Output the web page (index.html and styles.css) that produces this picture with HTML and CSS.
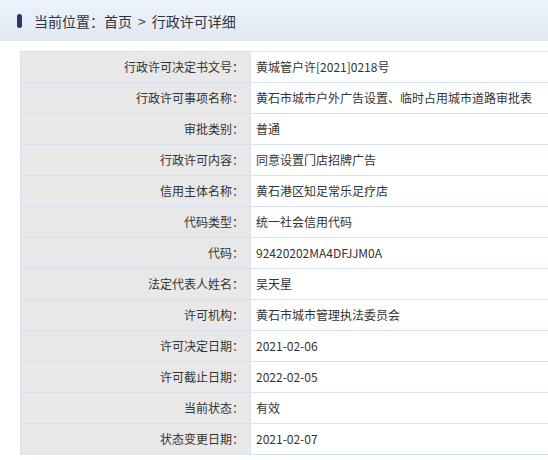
FILE: index.html
```html
<!DOCTYPE html>
<html lang="zh-CN">
<head>
<meta charset="utf-8">
<title>行政许可详细</title>
<link rel="stylesheet" href="styles.css">
</head>
<body>
<div class="crumb">
  <span class="mark"></span>
  <span class="crumb-text">当前位置：首页<span class="sep">&gt;</span>行政许可详细</span>
</div>
<div class="content">
  <table class="detail">
    <tr><th>行政许可决定书文号：</th><td>黄城管户许[2021]0218号</td></tr>
    <tr><th>行政许可事项名称：</th><td>黄石市城市户外广告设置、临时占用城市道路审批表</td></tr>
    <tr><th>审批类别：</th><td>普通</td></tr>
    <tr><th>行政许可内容：</th><td>同意设置门店招牌广告</td></tr>
    <tr><th>信用主体名称：</th><td>黄石港区知足常乐足疗店</td></tr>
    <tr><th>代码类型：</th><td>统一社会信用代码</td></tr>
    <tr><th>代码：</th><td>92420202MA4DFJJM0A</td></tr>
    <tr><th>法定代表人姓名：</th><td>吴天星</td></tr>
    <tr><th>许可机构：</th><td>黄石市城市管理执法委员会</td></tr>
    <tr><th>许可决定日期：</th><td>2021-02-06</td></tr>
    <tr><th>许可截止日期：</th><td>2022-02-05</td></tr>
    <tr><th>当前状态：</th><td>有效</td></tr>
    <tr><th>状态变更日期：</th><td>2021-02-07</td></tr>
  </table>
</div>
</body>
</html>
```

FILE: styles.css
```css
html, body {
  margin: 0;
  padding: 0;
  overflow: hidden;
  background: #fff;
}
body {
  font-family: "Noto Sans CJK SC", "Noto Sans", sans-serif;
  color: #333;
}
.crumb {
  height: 41px;
  display: flex;
  align-items: center;
  padding-left: 17px;
  background: linear-gradient(to bottom, #ebf3fd, #e1e8f2);
}
.mark {
  width: 5px;
  height: 14px;
  border-radius: 3px;
  background: #2b366b;
  margin-right: 12px;
}
.crumb-text {
  font-size: 14px;
  color: #2f3340;
  line-height: 1;
}
.sep {
  display: inline-block;
  margin: 0 6px;
}
.content {
  padding: 10px 0 0 20px;
}
.detail {
  border-collapse: collapse;
  width: 620px;
  font-size: 12px;
}
.detail th,
.detail td {
  border: 1px solid #d6e2f3;
  height: 30px;
  padding: 0;
  line-height: 30px;
  box-sizing: border-box;
  font-weight: normal;
  white-space: nowrap;
}
.detail th {
  width: 230px;
  background: #e8e8e8;
  text-align: right;
  padding-right: 6px;
  color: #333;
}
.detail td {
  text-align: left;
  padding-left: 5px;
  color: #333;
}
.detail tr {
  height: 31px;
}
```
